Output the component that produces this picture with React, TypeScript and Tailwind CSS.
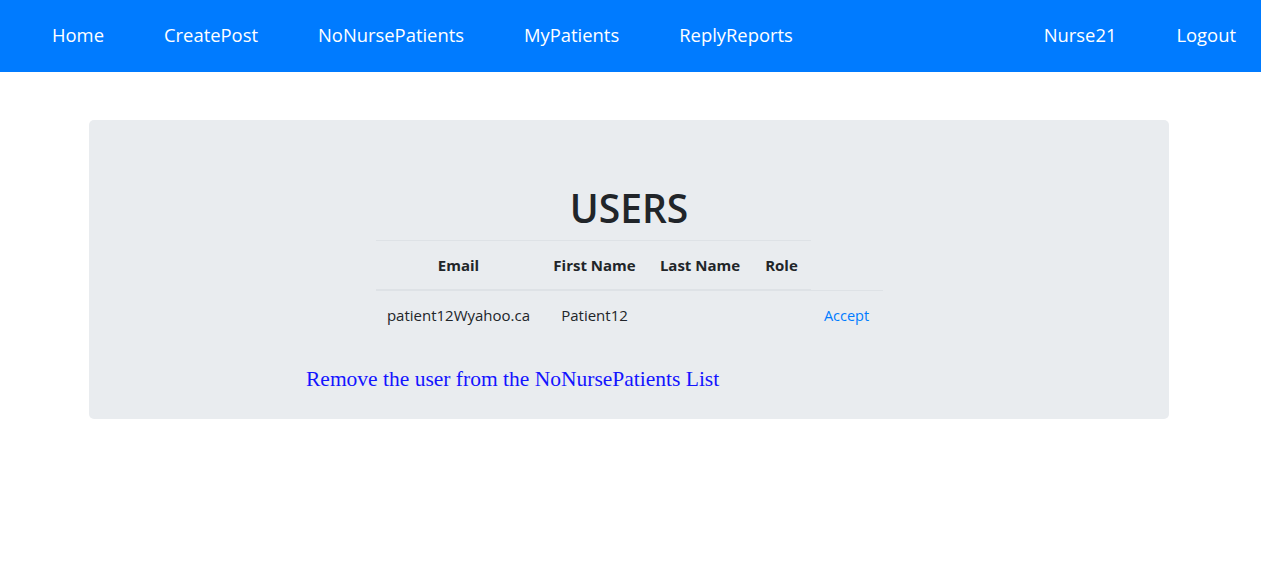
import React from "react";

const leftLinks = ["Home", "CreatePost", "NoNursePatients", "MyPatients", "ReplyReports"];
const rightLinks = ["Nurse21", "Logout"];

const sans = "font-['Open_Sans','Noto_Sans',sans-serif]";

export default function App() {
  return (
    <div className={`min-h-screen bg-white ${sans} text-[#212529]`}>
      {/* Top navbar */}
      <nav className="flex h-[72px] items-center justify-between bg-[#007bff] pb-[3px] pl-[52px] pr-[25px]">
        <div className="flex gap-[60px]">
          {leftLinks.map((l) => (
            <a key={l} className="text-[18.4px] text-white">
              {l}
            </a>
          ))}
        </div>
        <div className="flex gap-[60px]">
          {rightLinks.map((l) => (
            <a key={l} className="text-[18.4px] text-white">
              {l}
            </a>
          ))}
        </div>
      </nav>

      {/* Jumbotron */}
      <main className="ml-[89px] mt-[48px] w-[1080px] rounded-[5px] bg-[#e9ecef] pt-[64px] pb-[25px]">
        <h1 className="mb-[8px] text-center text-[39px] font-semibold leading-[48px]">USERS</h1>

        <table className="mx-auto w-[507px] table-fixed border-collapse text-center text-[15px]">
          <colgroup>
            <col className="w-[166px]" />
            <col className="w-[106px]" />
            <col className="w-[105px]" />
            <col className="w-[58px]" />
            <col className="w-[72px]" />
          </colgroup>
          <thead>
            <tr>
              {["Email", "First Name", "Last Name", "Role"].map((h) => (
                <th
                  key={h}
                  className="border-t border-b-2 border-[#dee2e6] px-0 py-[12px] font-bold leading-[24px] whitespace-nowrap"
                >
                  {h}
                </th>
              ))}
            </tr>
          </thead>
          <tbody>
            <tr>
              <td className="border-t border-[#dee2e6] py-[12px] leading-[24px]">patient12Wyahoo.ca</td>
              <td className="border-t border-[#dee2e6] py-[12px] leading-[24px]">Patient12</td>
              <td className="border-t border-[#dee2e6] py-[12px] leading-[24px]"></td>
              <td className="border-t border-[#dee2e6] py-[12px] leading-[24px]"></td>
              <td className="border-t border-[#dee2e6] py-[12px] leading-[24px]">
                <a className="text-[14.5px] text-[#007bff]">Accept</a>
              </td>
            </tr>
          </tbody>
        </table>

        <p className="mt-[24px] pl-[217px] font-['Liberation_Serif',serif] text-[21.5px] leading-[30px] text-[#1414ff]">
          Remove the user from the NoNursePatients List
        </p>
      </main>
    </div>
  );
}
